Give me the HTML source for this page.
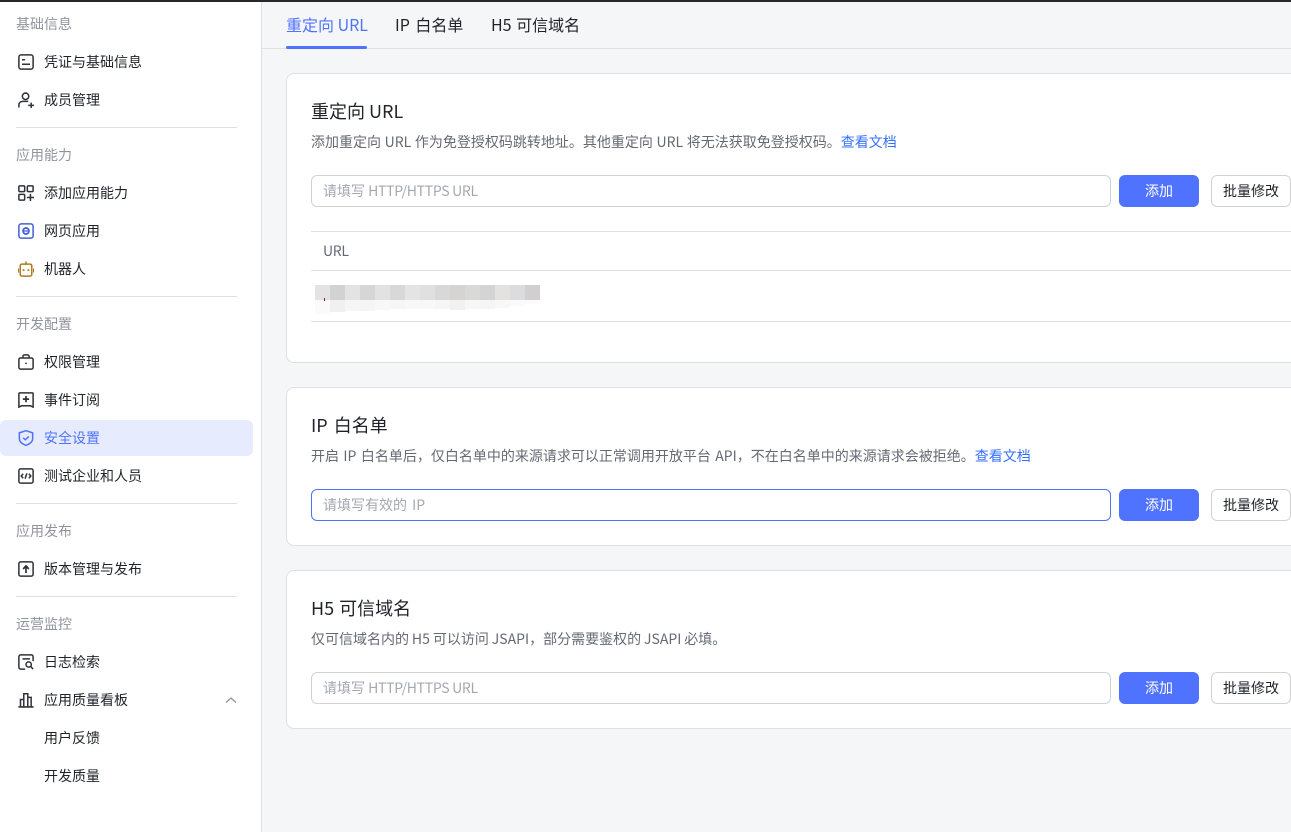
<!DOCTYPE html>
<html lang="zh"><head><meta charset="utf-8"><title>安全设置</title>
<style>
html,body{margin:0;padding:0;width:1291px;height:832px;overflow:hidden;background:#f5f6f7}
body{position:relative;font-family:"Noto Sans CJK SC","Liberation Sans",sans-serif;color:#1f2329}
.a{position:absolute;white-space:nowrap}
.lab{left:16px;font-size:14px;line-height:22px;color:#8f959e}
.it{left:44px;font-size:14px;line-height:22px;color:#1f2329}
.hr{position:absolute;left:16px;width:221px;height:1px;background:#dee0e3}
svg.ic{position:absolute;left:18px;width:16px;height:16px;fill:none;stroke:#2f3238;stroke-width:1.7}
.card{position:absolute;left:286px;width:1020px;background:#fff;border:1px solid #dee0e3;border-radius:8px;box-sizing:border-box}
.title{left:311px;font-size:18px;line-height:26px;color:#1f2329}
.desc{left:311px;font-size:14px;line-height:20px;color:#646a73}
.desc a{color:#3370ff;text-decoration:none}
.inp{position:absolute;left:311px;width:800px;height:32px;box-sizing:border-box;border:1px solid #d0d3d6;border-radius:6px;background:#fff;font-size:14px;line-height:30px;color:#a3a8b0;padding-left:11px;white-space:nowrap;overflow:hidden}
.inp span{letter-spacing:-.3px}
.btn{position:absolute;left:1119px;width:80px;height:32px;border-radius:6px;background:#5073ff;color:#fff;font-size:14px;line-height:32px;text-align:center;overflow:hidden}
.btn2{position:absolute;left:1211px;width:80px;height:32px;box-sizing:border-box;border:1px solid #d0d3d6;border-radius:6px;background:#fff;color:#1f2329;font-size:14px;line-height:30px;text-align:center;white-space:nowrap;overflow:hidden}
.tab{top:12px;font-size:16px;line-height:24px;color:#1f2329}
.px{position:absolute;top:285px;height:15px;width:15px}
.px2{position:absolute;top:300px;width:15px}
</style></head><body>
<div class="a" style="left:0;top:0;width:1291px;height:2px;background:#25282c"></div>
<div class="a" style="left:0;top:2px;width:261px;height:830px;background:#fff;border-right:1px solid #dee0e3"></div>

<div class="a" style="left:0;top:420px;width:253px;height:36px;background:#e6ecfd;border-radius:6px"></div>

<div class="a lab" style="top:13px">基础信息</div>
<div class="a it" style="top:51px">凭证与基础信息</div>
<div class="a it" style="top:89px">成员管理</div>
<div class="hr" style="top:127px"></div>
<div class="a lab" style="top:144px">应用能力</div>
<div class="a it" style="top:182px">添加应用能力</div>
<div class="a it" style="top:220px">网页应用</div>
<div class="a it" style="top:258px">机器人</div>
<div class="hr" style="top:296px"></div>
<div class="a lab" style="top:313px">开发配置</div>
<div class="a it" style="top:351px">权限管理</div>
<div class="a it" style="top:389px">事件订阅</div>
<div class="a it" style="top:427px;color:#5073ff">安全设置</div>
<div class="a it" style="top:465px">测试企业和人员</div>
<div class="hr" style="top:503px"></div>
<div class="a lab" style="top:520px">应用发布</div>
<div class="a it" style="top:558px">版本管理与发布</div>
<div class="hr" style="top:596px"></div>
<div class="a lab" style="top:613px">运营监控</div>
<div class="a it" style="top:651px">日志检索</div>
<div class="a it" style="top:689px">应用质量看板</div>
<div class="a it" style="top:727px">用户反馈</div>
<div class="a it" style="top:765px">开发质量</div>

<svg class="ic" style="top:54px" viewBox="0 0 18 18"><rect x="1" y="1" width="16" height="16" rx="2.500"/><path d="M4.500 6.500h3.500M4.500 11.500h9"/></svg>
<svg class="ic" style="top:92px" viewBox="0 0 18 18"><circle cx="8.500" cy="4.800" r="3.600"/><path d="M1 17.500v-3a4 4 0 0 1 4-4h6.500M11.500 15h6.500M14.800 12v6"/></svg>
<svg class="ic" style="top:185px" viewBox="0 0 18 18"><rect x="1" y="1" width="6.500" height="6.500" rx="1"/><rect x="10.500" y="1" width="6.500" height="6.500" rx="1"/><rect x="1" y="10.500" width="6.500" height="6.500" rx="1"/><path d="M10 14h8M14 10v8"/></svg>
<svg class="ic" style="top:223px;stroke:#4560d6" viewBox="0 0 18 18"><rect x="1" y="1" width="16" height="16" rx="2.500"/><circle cx="9" cy="9" r="3.300" stroke-width="2"/><path d="M6 9h6" stroke-width="1.400"/></svg>
<svg class="ic" style="top:261px;stroke:#b5771f" viewBox="0 0 18 18"><rect x="2.500" y="3.500" width="13" height="13.500" rx="1.800"/><path d="M9 .5v3M.3 8.500v4.500M17.700 8.500v4.500"/><path d="M6.300 9.300v2M11.700 9.300v2" stroke-width="2"/></svg>
<svg class="ic" style="top:354px" viewBox="0 0 18 18"><rect x="1" y="4.500" width="16" height="12.500" rx="1.800"/><path d="M5.500 4.500V2.800A1.800 1.800 0 0 1 7.300 1h3.400a1.800 1.800 0 0 1 1.800 1.800v1.700"/><circle cx="9" cy="10.500" r="1" fill="#2f3238" stroke="none"/></svg>
<svg class="ic" style="top:392px" viewBox="0 0 18 18"><path d="M1 17V2a1 1 0 0 1 1-1h14a1 1 0 0 1 1 1v15l-3-1.500H4z"/><path d="M5.500 8h7M9 4.500v7" stroke-width="1.900"/></svg>
<svg class="ic" style="top:430px;stroke:#5073ff" viewBox="0 0 18 18"><path d="M9 .8l7.500 2.400v6.300c0 3.700-3.400 6.200-7.500 7.700-4.100-1.500-7.500-4-7.500-7.700V3.200z"/><path d="M5.800 8.800L8.200 11l4-3.800"/></svg>
<svg class="ic" style="top:468px" viewBox="0 0 18 18"><rect x="1" y="1" width="16" height="16" rx="2"/><path d="M5.800 6.500L3.600 9l2.200 2.500M12.200 6.500L14.400 9l-2.200 2.500M10 6l-2 6"/></svg>
<svg class="ic" style="top:561px" viewBox="0 0 18 18"><rect x="1" y="1" width="16" height="16" rx="2"/><path d="M9 13.500V6M5.800 9L9 5.500 12.200 9" stroke-width="1.900"/></svg>
<svg class="ic" style="top:654px" viewBox="0 0 18 18"><path d="M17 8V3a2 2 0 0 0-2-2H3a2 2 0 0 0-2 2v12a2 2 0 0 0 2 2h5"/><path d="M5 5.500h8.500"/><circle cx="12" cy="11.800" r="3"/><path d="M14.200 14l2.800 3"/></svg>
<svg class="ic" style="top:692px" viewBox="0 0 18 18"><path d="M.5 16.800h17M2.800 16.800V8.500h3.700v8.300M6.500 16.800V2h4.500v14.800M11 16.800V6h3.800v10.800"/></svg>
<svg class="a" style="left:225px;top:695px;width:12px;height:10px;fill:none;stroke:#8f959e;stroke-width:1.300" viewBox="0 0 12 10"><path d="M1 7.500L6 3l5 4.500"/></svg>

<!-- tabs -->
<div class="a" style="left:262px;top:48px;width:1029px;height:1px;background:#dee0e3"></div>
<div class="a tab" style="left:286px;color:#5073ff">重定向 URL</div>
<div class="a tab" style="left:395px;word-spacing:2px">IP 白名单</div>
<div class="a tab" style="left:491px;word-spacing:1px">H5 可信域名</div>
<div class="a" style="left:286px;top:46px;width:81px;height:3px;background:#5073ff;border-radius:2px"></div>

<!-- card 1 -->
<div class="card" style="top:73px;height:290px"></div>
<div class="a title" style="top:98px">重定向 URL</div>
<div class="a desc" style="top:132px;word-spacing:.5px">添加重定向 URL 作为免登授权码跳转地址。其他重定向 URL 将无法获取免登授权码。<a>查看文档</a></div>
<div class="inp" style="top:175px">请填写 <span>HTTP/HTTPS URL</span></div>
<div class="btn" style="top:175px">添加</div>
<div class="btn2" style="top:175px">批量修改</div>
<div class="a" style="left:311px;top:231px;width:980px;height:1px;background:#dee0e3"></div>
<div class="a" style="left:323px;top:240px;font-size:14px;line-height:22px;letter-spacing:-.3px;color:#646a73">URL</div>
<div class="a" style="left:311px;top:270px;width:980px;height:1px;background:#dee0e3"></div>
<div class="a" style="left:311px;top:321px;width:980px;height:1px;background:#dee0e3"></div>

<div class="px" style="left:315px;background:#e4e3e4"></div><div class="px" style="left:330px;background:#d3d2d3"></div><div class="px" style="left:345px;background:#e4e3e4"></div><div class="px" style="left:360px;background:#d6d6d5"></div><div class="px" style="left:375px;background:#e2e2e2"></div><div class="px" style="left:390px;background:#d8d8db"></div><div class="px" style="left:405px;background:#e5e4e5"></div><div class="px" style="left:420px;background:#e0e0e1"></div><div class="px" style="left:435px;background:#d9d8d9"></div><div class="px" style="left:450px;background:#d5d4d3"></div><div class="px" style="left:465px;background:#d9d9d8"></div><div class="px" style="left:480px;background:#d5d4d5"></div><div class="px" style="left:495px;background:#e4e2e0"></div><div class="px" style="left:510px;background:#dcdbdd"></div><div class="px" style="left:525px;background:#d1cfd0"></div>
<div class="px2" style="left:315px;height:14px;background:#fafafa"></div><div class="px2" style="left:330px;height:12px;background:#f1f0f0"></div><div class="px2" style="left:345px;height:11px;background:#f6f6f6"></div><div class="px2" style="left:360px;height:11px;background:#f5f5f5"></div><div class="px2" style="left:375px;height:10px;background:#f8f8f8"></div><div class="px2" style="left:390px;height:9px;background:#f6f6f6"></div><div class="px2" style="left:405px;height:9px;background:#f8f8f8"></div><div class="px2" style="left:420px;height:9px;background:#f8f8f8"></div><div class="px2" style="left:435px;height:9px;background:#f6f6f6"></div><div class="px2" style="left:450px;height:10px;background:#f1f1f1"></div><div class="px2" style="left:465px;height:9px;background:#f7f7f7"></div><div class="px2" style="left:480px;height:9px;background:#f5f5f5"></div><div class="px2" style="left:495px;height:8px;background:#f8f8f8"></div><div class="px2" style="left:510px;height:6px;background:#fafafa"></div><div class="px2" style="left:525px;height:4px;background:#fbfbfb"></div>
<div class="a" style="left:324px;top:298px;width:1px;height:3px;background:#a01818"></div>

<!-- card 2 -->
<div class="card" style="top:387px;height:159px"></div>
<div class="a title" style="top:412px;word-spacing:2px">IP 白名单</div>
<div class="a desc" style="top:446px;word-spacing:1.3px">开启 IP 白名单后，仅白名单中的来源请求可以正常调用开放平台 API，不在白名单中的来源请求会被拒绝。<a>查看文档</a></div>
<div class="inp" style="top:489px;border-color:#5073ff;word-spacing:2px">请填写有效的 IP</div>
<div class="btn" style="top:489px">添加</div>
<div class="btn2" style="top:489px">批量修改</div>

<!-- card 3 -->
<div class="card" style="top:570px;height:159px"></div>
<div class="a title" style="top:595px;word-spacing:1px">H5 可信域名</div>
<div class="a desc" style="top:629px;word-spacing:-.2px">仅可信域名内的 H5 可以访问 JSAPI，部分需要鉴权的 JSAPI 必填。</div>
<div class="inp" style="top:672px">请填写 <span>HTTP/HTTPS URL</span></div>
<div class="btn" style="top:672px">添加</div>
<div class="btn2" style="top:672px">批量修改</div>
</body></html>
